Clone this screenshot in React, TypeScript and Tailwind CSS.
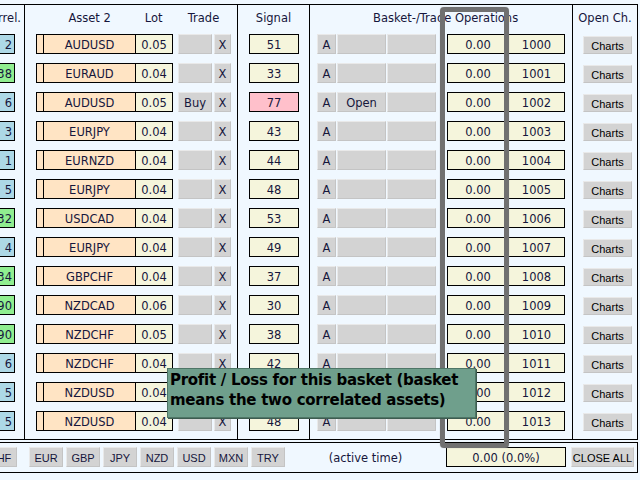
import React from "react";

type Row = {
  cor: string;
  corGreen: boolean;
  asset: string;
  lot: string;
  trade: string;
  signal: string;
  pink: boolean;
  open: string;
  num: string;
};

const raw: [string, boolean, string, string, string, string, boolean, string][] = [
  ["2", false, "AUDUSD", "0.05", "", "51", false, ""],
  ["38", true, "EURAUD", "0.04", "", "33", false, ""],
  ["6", false, "AUDUSD", "0.05", "Buy", "77", true, "Open"],
  ["3", false, "EURJPY", "0.04", "", "43", false, ""],
  ["1", false, "EURNZD", "0.04", "", "44", false, ""],
  ["5", false, "EURJPY", "0.04", "", "48", false, ""],
  ["32", true, "USDCAD", "0.04", "", "53", false, ""],
  ["4", false, "EURJPY", "0.04", "", "49", false, ""],
  ["34", true, "GBPCHF", "0.04", "", "37", false, ""],
  ["90", true, "NZDCAD", "0.06", "", "30", false, ""],
  ["90", true, "NZDCHF", "0.05", "", "38", false, ""],
  ["6", false, "NZDCHF", "0.04", "", "42", false, ""],
  ["5", false, "NZDUSD", "0.04", "", "45", false, ""],
  ["5", false, "NZDUSD", "0.04", "", "48", false, ""],
];

const rows: Row[] = raw.map((r, i) => ({
  cor: r[0],
  corGreen: r[1],
  asset: r[2],
  lot: r[3],
  trade: r[4],
  signal: r[5],
  pink: r[6],
  open: r[7],
  num: String(1000 + i),
}));

const btn =
  "bg-[#d3d3d3] border border-t-[#e9e9e9] border-l-[#e9e9e9] border-r-[#c4c4c4] border-b-[#c4c4c4] flex items-center justify-center pt-[3px]";

function Header({ children, end }: { children: React.ReactNode; end?: boolean }) {
  return (
    <div
      className={
        "h-[29px] flex items-center pb-[2px] whitespace-nowrap overflow-hidden " +
        (end ? "justify-end pr-[3px]" : "justify-center")
      }
    >
      {children}
    </div>
  );
}

export default function App() {
  return (
    <div className="w-[640px] h-[480px] bg-[#f0f8ff] relative overflow-hidden font-['DejaVu_Sans',sans-serif] text-[11.5px] text-[#16163c] leading-none">
      <div className="h-[4px]" />
      {/* upper panel */}
      <div className="flex h-[436px] w-[638px] border-y border-black">
        {/* Correl */}
        <div className="w-[25px] border-r border-black flex flex-col">
          <Header end>Correl.</Header>
          <div className="flex flex-col gap-[9px]">
            {rows.map((r, i) => (
              <div
                key={i}
                className={
                  "h-[20px] w-[15px] border-y border-r border-black flex items-center justify-end pr-[2px] pt-[3px] " +
                  (r.corGreen ? "bg-[#90ee90]" : "bg-[#add8e6]")
                }
              >
                {r.cor}
              </div>
            ))}
          </div>
        </div>
        {/* Asset 2 / Lot / Trade */}
        <div className="w-[213px] border-r border-black flex flex-col">
          <div className="h-[29px] flex items-center pb-[2px]">
            <div className="w-[136px] ml-[11px] flex">
              <div className="w-[8px]" />
              <div className="w-[92px] text-center">Asset 2</div>
              <div className="w-[37px] text-center">Lot</div>
            </div>
            <div className="w-[53px] ml-[5px] text-center">Trade</div>
          </div>
          <div className="flex flex-col gap-[9px]">
            {rows.map((r, i) => (
              <div key={i} className="h-[20px] flex pl-[11px]">
                <div className="flex border border-black h-[20px]">
                  <div className="w-[7px] bg-[#ffe4c4] border-r border-black" />
                  <div className="w-[92px] bg-[#ffe4c4] border-r border-black flex items-center justify-center pt-[3px]">
                    {r.asset}
                  </div>
                  <div className="w-[36px] bg-[#f5f5dc] flex items-center justify-center pt-[3px]">{r.lot}</div>
                </div>
                <div className={btn + " w-[34px] h-[20px] ml-[5px]"}>{r.trade}</div>
                <div className={btn + " w-[17px] h-[20px] ml-[2px]"}>X</div>
              </div>
            ))}
          </div>
        </div>
        {/* Signal */}
        <div className="w-[72px] border-r border-black flex flex-col">
          <Header>Signal</Header>
          <div className="flex flex-col gap-[9px]">
            {rows.map((r, i) => (
              <div key={i} className="h-[20px] flex pl-[11px]">
                <div
                  className={
                    "w-[50px] h-[20px] border border-black flex items-center justify-center pt-[3px] " +
                    (r.pink ? "bg-[#ffc0cb]" : "bg-[#f5f5dc]")
                  }
                >
                  {r.signal}
                </div>
              </div>
            ))}
          </div>
        </div>
        {/* Basket ops */}
        <div className="w-[263px] border-r border-black flex flex-col">
          <div className="h-[29px] flex items-center pb-[2px] pl-[63px] whitespace-nowrap">
            Basket-/Trade Operations
          </div>
          <div className="flex flex-col gap-[9px]">
            {rows.map((r, i) => (
              <div key={i} className="h-[20px] flex pl-[7px]">
                <div className={btn + " w-[19px] h-[20px]"}>A</div>
                <div className={btn + " w-[49px] h-[20px] ml-[1px]"}>{r.open}</div>
                <div className={btn + " w-[49px] h-[20px] ml-[1px]"} />
                <div className="flex border border-black h-[20px] ml-[11px] bg-[#f5f5dc]">
                  <div className="w-[61px] border-r border-black flex items-center justify-center pt-[3px]">0.00</div>
                  <div className="w-[55px] flex items-center justify-center pt-[3px]">{r.num}</div>
                </div>
              </div>
            ))}
          </div>
        </div>
        {/* Open Ch */}
        <div className="w-[65px] border-r border-black flex flex-col">
          <Header>Open Ch.</Header>
          <div className="flex flex-col gap-[9px]">
            {rows.map((r, i) => (
              <div key={i} className="h-[20px] flex items-end pl-[10px]">
                <div
                  className={
                    btn +
                    " w-[49px] h-[18px] font-['Liberation_Sans',sans-serif] text-[11px] text-black"
                  }
                >
                  Charts
                </div>
              </div>
            ))}
          </div>
        </div>
      </div>
      <div className="h-[2px]" />
      {/* bottom panel */}
      <div className="w-[638px] h-[31px] border-y border-r border-black flex items-start pt-[4px]">
        <div className="flex font-['Liberation_Sans',sans-serif] text-[11px] text-[#16163c]">
          <div className={btn + " w-[34px] h-[20px] ml-[-17px]"}>CHF</div>
          {["EUR", "GBP", "JPY", "NZD", "USD", "MXN", "TRY"].map((c, i) => (
            <div key={c} className={btn + " w-[34px] h-[20px] " + (i === 0 ? "ml-[12px]" : "ml-[3px]")}>
              {c}
            </div>
          ))}
        </div>
        <div className="w-[161px] h-[20px] flex items-center justify-center pt-[3px]">(active time)</div>
        <div className="w-[120px] h-[20px] border border-black bg-[#f5f5dc] flex items-center justify-center pt-[3px]">
          0.00 (0.0%)
        </div>
        <div
          className={
            btn + " w-[63px] h-[20px] ml-[5px] font-['Liberation_Sans',sans-serif] text-[11px] text-black"
          }
        >
          CLOSE ALL
        </div>
      </div>

      {/* highlight frame */}
      <div className="absolute left-[440px] top-[7px] w-[69px] h-[441px] border-[5px] border-[#707070] rounded-[4px] shadow-[0_0_1px_#9a9a9a]" />

      {/* tooltip */}
      <div className="absolute left-[167px] top-[368px] w-[309px] h-[50px] bg-[#6f9f8c] border border-[#4e7566] shadow-[1px_1px_0_#3d5c50] pt-[1px] pl-[2px] font-['DejaVu_Sans',sans-serif] font-bold text-[15px] tracking-[-0.28px] leading-[20px] text-black whitespace-nowrap">
        <div>Profit / Loss for this basket (basket</div>
        <div>means the two correlated assets)</div>
      </div>
    </div>
  );
}
